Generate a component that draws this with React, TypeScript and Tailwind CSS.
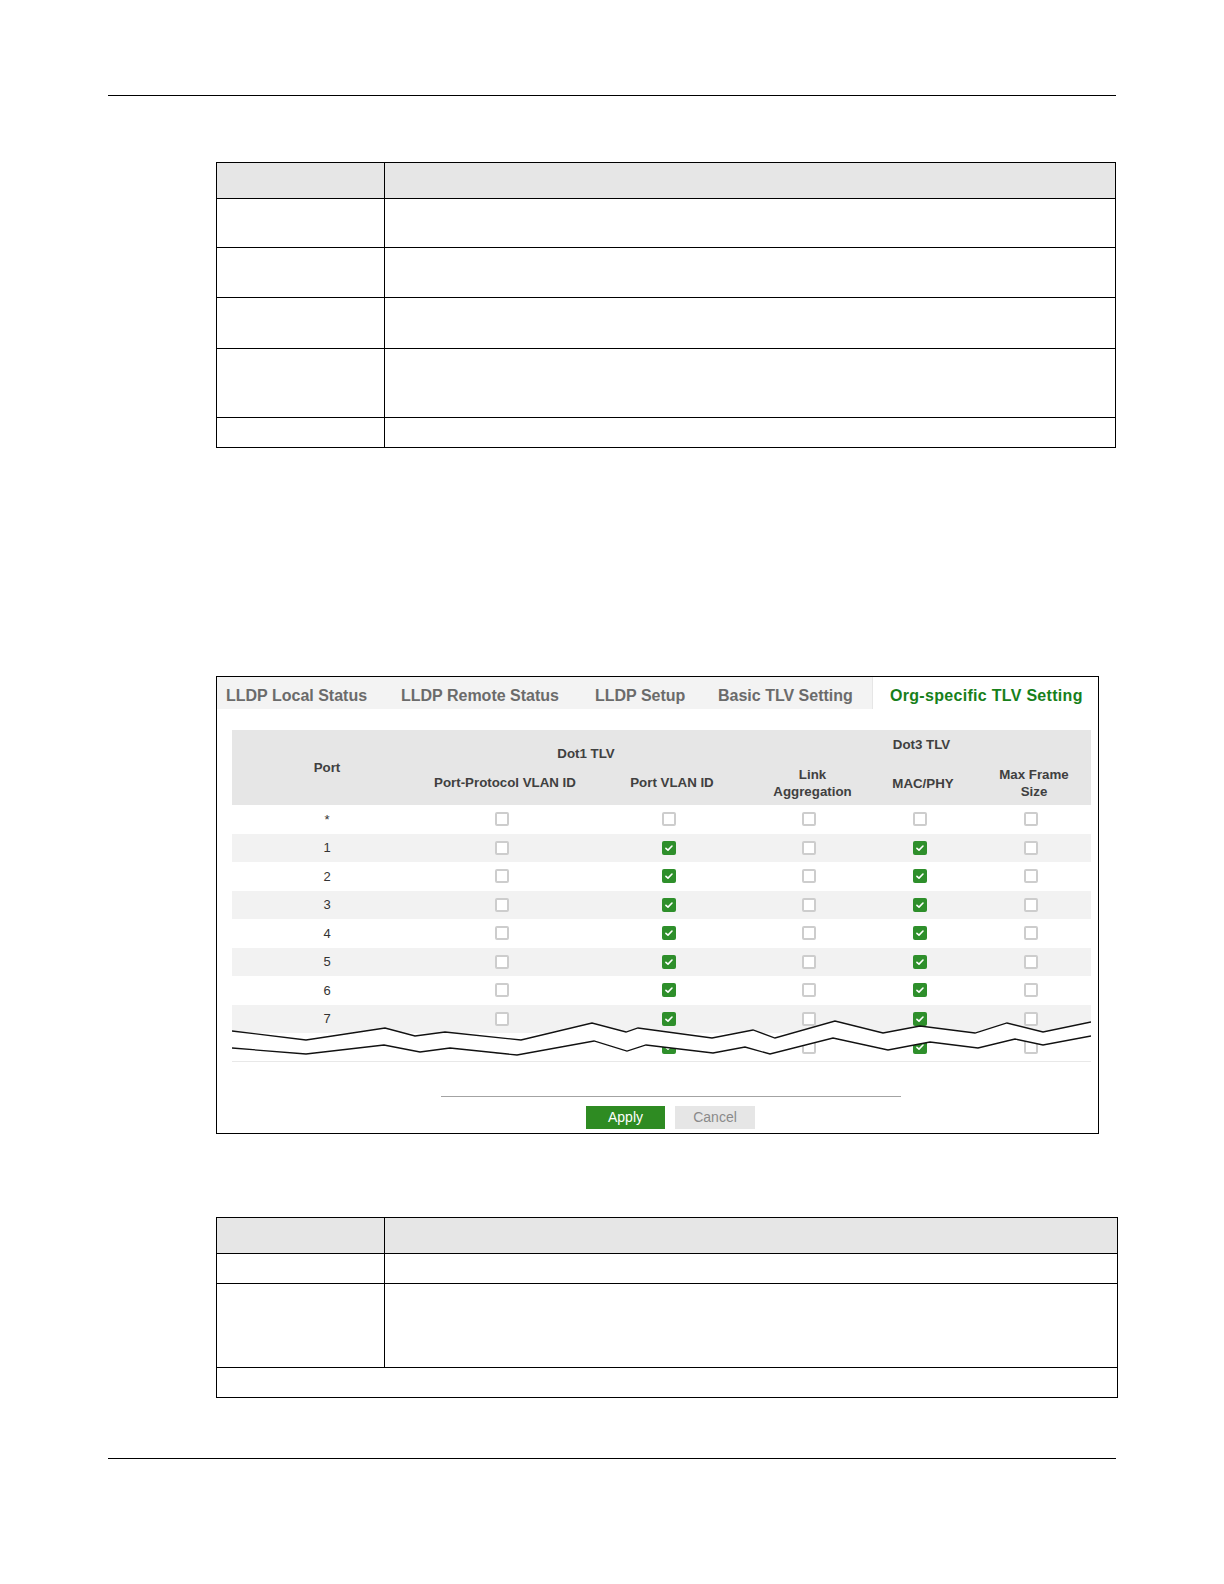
import { Fragment } from "react";

const font = "font-['Liberation_Sans',Arial,sans-serif]";

const tabs = [
  { id: "local", label: "LLDP Local Status", cls: "w-[166px] pl-[9px]" },
  { id: "remote", label: "LLDP Remote Status", cls: "w-[193px] pl-[18px]" },
  { id: "setup", label: "LLDP Setup", cls: "w-[124px] pl-[19px]" },
  { id: "basic", label: "Basic TLV Setting", cls: "w-[172px] pl-[18px]" },
  { id: "org", label: "Org-specific TLV Setting", cls: "flex-1 pl-[17px]" },
];

// column widths of the inner table
const cols = ["w-[190px]", "w-[166px]", "w-[168px]", "w-[113px]", "w-[108px]", "w-[114px]"];

// [ppvid, pvid, linkAgg, macPhy, maxFrame]
const ports = [
  { port: "*", on: [false, false, false, false, false] },
  { port: "1", on: [false, true, false, true, false] },
  { port: "2", on: [false, true, false, true, false] },
  { port: "3", on: [false, true, false, true, false] },
  { port: "4", on: [false, true, false, true, false] },
  { port: "5", on: [false, true, false, true, false] },
  { port: "6", on: [false, true, false, true, false] },
  { port: "7", on: [false, true, false, true, false] },
];

const topRows = ["h-[49px]", "h-[50px]", "h-[51px]", "h-[69px]", "h-[30px]"];

const zigTop: [number, number][] = [
  [232, 1031], [306, 1040], [385, 1028], [415, 1036], [445, 1032], [521, 1040], [592, 1023],
  [626, 1032], [638, 1028], [712, 1038], [753, 1030], [775, 1038], [835, 1021], [883, 1033],
  [920, 1026], [975, 1033], [1007, 1023], [1043, 1032], [1091, 1022],
];
const zigBottom: [number, number][] = [
  [232, 1048], [306, 1054], [384, 1045], [420, 1052], [450, 1048], [517, 1055], [594, 1041],
  [627, 1051], [646, 1045], [713, 1053], [745, 1047], [770, 1054], [833, 1038], [888, 1050],
  [930, 1042], [978, 1048], [1015, 1039], [1043, 1045], [1091, 1036],
];
const pts = (a: [number, number][]) => a.map(([x, y]) => `${x},${y}`).join(" ");

function Box({ on }: { on: boolean }) {
  if (on) {
    return (
      <span className="w-[14px] h-[14px] rounded-[2px] bg-[#2e8f2b] flex items-center justify-center">
        <svg viewBox="0 0 12 12" className="w-[10px] h-[10px]">
          <path d="M2.3 6.4 L4.8 8.6 L9.6 3.6" stroke="white" strokeWidth="1.9" fill="none" strokeLinecap="round" strokeLinejoin="round" />
        </svg>
      </span>
    );
  }
  return <span className="w-[14px] h-[14px] rounded-[2px] border-2 border-[#cdcdcd] bg-white" />;
}

function Row({ port, on, shaded }: { port: string; on: boolean[]; shaded: boolean }) {
  return (
    <div className={`flex h-[28.5px] items-center ${shaded ? "bg-[#f2f2f2]" : "bg-white"}`}>
      <div className={`${cols[0]} text-center text-[13px] text-[#333]`}>{port}</div>
      {on.map((v, i) => (
        <div key={i} className={`${cols[i + 1]} flex justify-center pr-[7px]`}>
          <Box on={v} />
        </div>
      ))}
    </div>
  );
}

function Cells() {
  return (
    <>
      <div className="w-[168px] border-r border-black" />
      <div className="flex-1" />
    </>
  );
}

export default function App() {
  return (
    <div className={`w-[1224px] h-[1584px] bg-white pt-[95px] ${font}`}>
      {/* Header rule */}
      <div className="ml-[108px] w-[1008px] h-px bg-black" />

      {/* Top description table */}
      <div className="ml-[216px] mt-[66px] w-[900px] border border-black">
        <div className="flex h-[35px] bg-[#e6e6e6]">
          <Cells />
        </div>
        {topRows.map((h, i) => (
          <div key={i} className={`flex ${h} border-t border-black`}>
            <Cells />
          </div>
        ))}
      </div>

      {/* Screenshot panel */}
      <div className="ml-[216px] mt-[228px] w-[883px] border border-black bg-white pb-[4px]">
        {/* Tabs */}
        <div className="flex h-[32px] items-stretch bg-[#f3f3f3]">
          {tabs.map((t) => (
            <div
              key={t.id}
              className={`${t.cls} flex items-center pt-[5px] text-[16px] font-bold ${
                t.id === "org"
                  ? "bg-white text-[#17801a] tracking-[0.3px] border-l border-[#e6e6e6]"
                  : "text-[#6b6b6b]"
              }`}
            >
              {t.label}
            </div>
          ))}
        </div>

        {/* Inner table */}
        <div className="relative ml-[15px] mt-[21px] w-[859px]">
          <div className="flex h-[75px] bg-[#e6e6e6] text-[13.3px] font-bold text-[#404040]">
            <div className={`${cols[0]} flex items-center justify-center`}>Port</div>
            <div className="w-[334px] pt-[16px]">
              <div className="h-[16px] leading-[16px] text-center pr-[6px]">Dot1 TLV</div>
              <div className="flex mt-[13px] h-[16px] leading-[16px]">
                <div className={`${cols[1]} text-center`}>Port-Protocol VLAN ID</div>
                <div className={`${cols[2]} text-center`}>Port VLAN ID</div>
              </div>
            </div>
            <div className="w-[335px] pt-[7px]">
              <div className="h-[16px] leading-[16px] text-center pr-[4px]">Dot3 TLV</div>
              <div className="flex mt-[13px] h-[34px] leading-[17px]">
                <div className={`${cols[3]} flex items-center justify-center text-center`}>
                  Link
                  <br />
                  Aggregation
                </div>
                <div className={`${cols[4]} flex items-center justify-center`}>MAC/PHY</div>
                <div className={`${cols[5]} flex items-center justify-center text-center`}>
                  Max Frame
                  <br />
                  Size
                </div>
              </div>
            </div>
          </div>

          {ports.map((p, i) => (
            <Row key={p.port} port={p.port} on={p.on} shaded={i % 2 === 1} />
          ))}

          {/* cut-off row 8 */}
          <div className="flex h-[29px] pt-[7px] bg-white border-b border-[#e8e8e8]">
            <div className={cols[0]} />
            {[false, true, false, true, false].map((v, i) => (
              <Fragment key={i}>
                <div className={`${cols[i + 1]} flex justify-center pr-[7px]`}>
                  <Box on={v} />
                </div>
              </Fragment>
            ))}
          </div>

          {/* Torn-edge break over the table */}
          <svg
            className="absolute left-0 top-[285px] w-[859px] h-[50px]"
            viewBox="232 1015 859 50"
          >
            <polygon points={`${pts(zigTop)} ${pts([...zigBottom].reverse())}`} fill="white" />
            <polyline points={pts(zigTop)} fill="none" stroke="#111" strokeWidth="1.3" />
            <polyline points={pts(zigBottom)} fill="none" stroke="#111" strokeWidth="1.3" />
          </svg>
        </div>

        {/* Separator + buttons */}
        <div className="ml-[224px] mt-[34px] w-[460px] h-px bg-[#a3a3a3]" />
        <div className="flex gap-[10px] ml-[369px] mt-[9px]">
          <button className="w-[79px] h-[23px] bg-[#2e8b22] text-white text-[14px] leading-[23px]">
            Apply
          </button>
          <button className="w-[80px] h-[23px] bg-[#e6e6e6] text-[#8a8a8a] text-[14px] leading-[23px]">
            Cancel
          </button>
        </div>
      </div>

      {/* Bottom description table */}
      <div className="ml-[216px] mt-[83px] w-[902px] border border-black">
        <div className="flex h-[35px] bg-[#e6e6e6]">
          <Cells />
        </div>
        <div className="flex h-[30px] border-t border-black">
          <Cells />
        </div>
        <div className="flex h-[84px] border-t border-black">
          <Cells />
        </div>
        <div className="h-[30px] border-t border-black" />
      </div>

      {/* Footer rule */}
      <div className="ml-[108px] mt-[60px] w-[1008px] h-px bg-black" />
    </div>
  );
}
